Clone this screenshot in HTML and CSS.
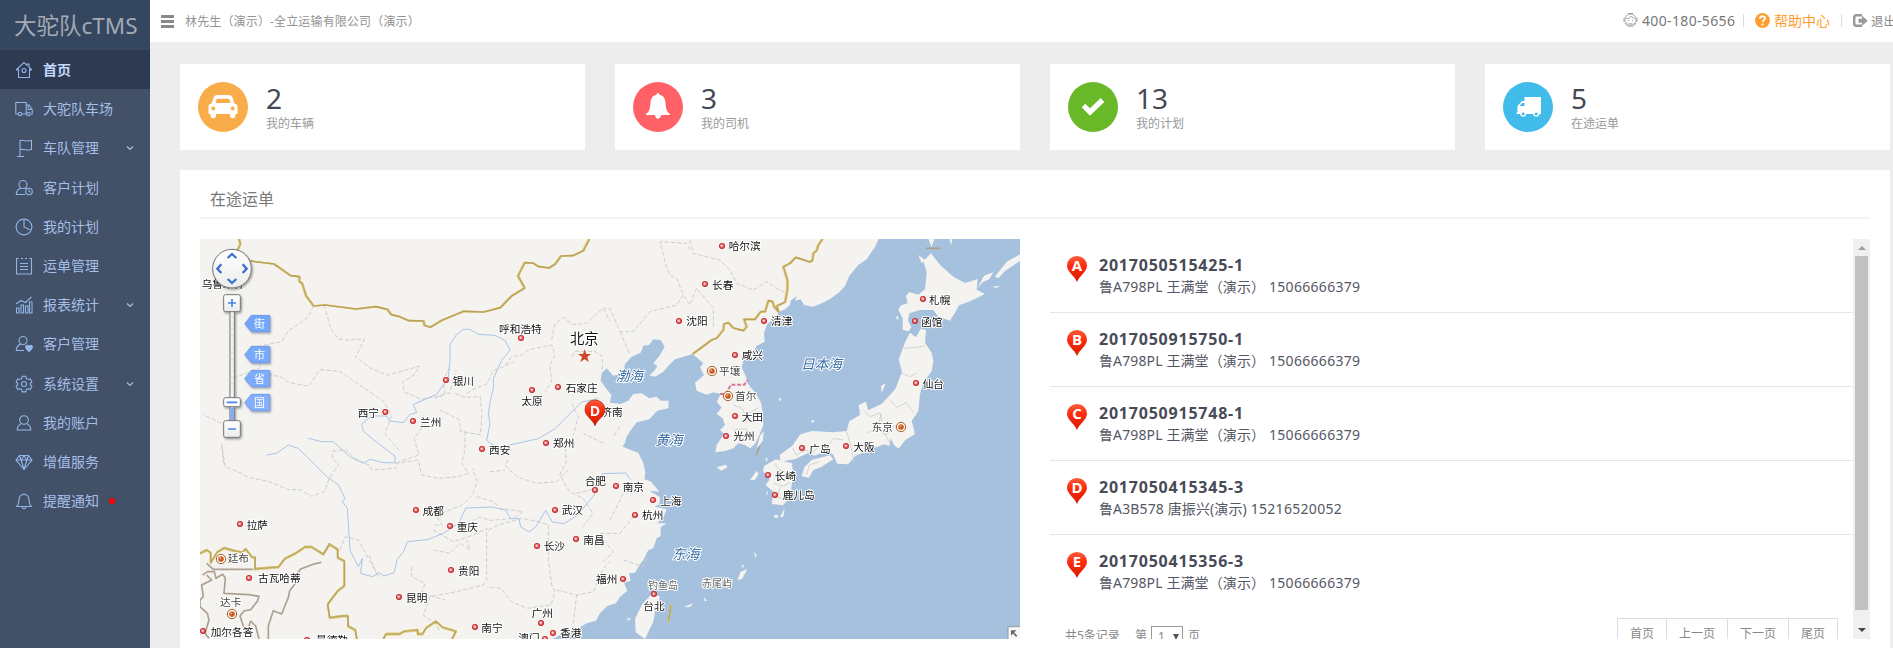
FILE: index.html
```html
<!DOCTYPE html>
<html lang="zh-CN">
<head>
<meta charset="utf-8">
<title>大驼队cTMS</title>
<link rel="stylesheet" href="styles.css">
</head>
<body>
<div class="app">
  <aside class="sidebar">
    <div class="brand">大驼队cTMS</div>
    <nav class="menu">
      <a class="item active"><svg class="ico" viewBox="0 0 18 18"><path d="M1 9 9 1.5 12 4.3V3h2v3.2L17 9M3.5 8v8.5h11V8M1 9h2.5M17 9h-2.5"/><circle cx="9" cy="9.5" r="2"/></svg><span>首页</span></a>
      <a class="item"><svg class="ico" viewBox="0 0 18 18"><path d="M3.5 14H.8V2.5h10.4V14H6.8M11.2 5h3l3 5v4h-1M13.2 5v4.5h3.6"/><circle cx="5" cy="14" r="1.7"/><circle cx="13.5" cy="14" r="1.7"/></svg><span>大驼队车场</span></a>
      <a class="item"><svg class="ico" viewBox="0 0 18 18"><path d="M5 17.5V1.5c3-1 5 1.500 11.500 0v9c-4 1.500-7-.8-11.500 0M2 17.500h7"/></svg><span>车队管理</span><svg class="chev" viewBox="0 0 8 8"><path d="M1 2.500 4 5.500 7 2.500"/></svg></a>
      <a class="item"><svg class="ico" viewBox="0 0 18 18"><circle cx="8" cy="5.500" r="4"/><path d="M6 9c-3 1-4.700 3.500-4.700 6.500H10M10 9.200l1.500.6"/><circle cx="14" cy="12.500" r="3.300"/><path d="M14 10.500v2l1.500.800"/></svg><span>客户计划</span></a>
      <a class="item"><svg class="ico" viewBox="0 0 18 18"><circle cx="9" cy="9" r="7.900"/><path d="M9 2v7l6.500 3"/></svg><span>我的计划</span></a>
      <a class="item"><svg class="ico" viewBox="0 0 18 18"><path d="M3.500 1.500H1.500v15.500h15V1.500h-2M6 1.500h2M10 1.500h2M5 6.500h8M5 9.500h8M5 12.500h8"/></svg><span>运单管理</span></a>
      <a class="item"><svg class="ico" viewBox="0 0 18 18"><path d="M1.500 12h2.500v5H1.500zM6 9h2.500v8H6zM10.500 10H13v7h-2.500zM14.500 6H17v11h-2.500zM1 8l5-3.500 4.500 2 6-5.500"/></svg><span>报表统计</span><svg class="chev" viewBox="0 0 8 8"><path d="M1 2.500 4 5.500 7 2.500"/></svg></a>
      <a class="item"><svg class="ico" viewBox="0 0 18 18"><circle cx="8" cy="5.500" r="4"/><path d="M6 9c-3 1-4.700 3.500-4.700 6.500H9"/><path class="solid" d="M14 16.500c-5-3.500-3.500-6.500-1.500-6.200 1 .1 1.500 1 1.500 1s.5-.9 1.500-1c2-.3 3.500 2.700-1.500 6.200z"/></svg><span>客户管理</span></a>
      <a class="item"><svg class="ico" viewBox="0 0 18 18"><path d="M7.300 1.300h3.400l.7 2.300 1.500.9 2.400-.6 1.600 2.900-1.600 1.700v1.200l1.600 1.700-1.600 2.900-2.400-.6-1.500.9-.7 2.300H7.300l-.7-2.300-1.500-.9-2.400.6-1.600-2.900 1.600-1.700V8.500L1.100 6.800l1.600-2.900 2.400.6 1.500-.9z"/><circle cx="9" cy="9" r="2.500"/></svg><span>系统设置</span><svg class="chev" viewBox="0 0 8 8"><path d="M1 2.500 4 5.500 7 2.500"/></svg></a>
      <a class="item"><svg class="ico" viewBox="0 0 18 18"><circle cx="9" cy="6" r="4.300"/><path d="M6.500 9.500C4 10.500 2.200 13 2.200 16h13.600c0-3-1.800-5.500-4.300-6.500"/></svg><span>我的账户</span></a>
      <a class="item"><svg class="ico" viewBox="0 0 18 18"><path d="M4.500 2.500h9L17 7l-8 9.500L1 7zM1.500 7h15M4.500 2.500 6 7l3 9 3-9 1.500-4.500M6 7l3-4 3 4"/></svg><span>增值服务</span></a>
      <a class="item"><svg class="ico" viewBox="0 0 18 18"><path d="M1.800 14.500h14.400C14 12.500 14.200 10 14 7.500c-.2-3-2-5-5-5s-4.800 2-5 5c-.2 2.500 0 5-2.200 7zM9 1v1.500M7 15c.3 2.200 3.700 2.200 4 0"/></svg><span>提醒通知</span><i class="dot"></i></a>
    </nav>
  </aside>

  <div class="content">
    <header class="topbar">
      <i class="burger"></i>
      <span class="who">林先生（演示）-全立运输有限公司（演示）</span>
      <div class="tools">
        <svg class="agent" viewBox="0 0 15 16"><circle cx="7.500" cy="7.500" r="5.600"/><path d="M3 6.500c3 0 4.500-1 5.500-2.500.5 1.500 2 2.500 4 2.500M1 6v4M14 6v4M5.300 8.500h1M9 8.500h1M5.500 11c1.200 1 2.800 1 4 0M2 11c1 4 9 5 11 0M5 1.500h5"/></svg>
        <span class="tel">400-180-5656</span>
        <i class="sep"></i>
        <svg class="help" viewBox="0 0 15 15"><circle cx="7.500" cy="7.500" r="7.400"/><path d="M5 5.800c0-3.300 5-3.200 5-.4 0 1.800-2.400 1.800-2.400 3.500M7.500 10.500v2"/></svg>
        <span class="helptxt">帮助中心</span>
        <i class="sep second"></i>
        <svg class="exit" viewBox="0 0 15 13"><path d="M9 1.200H3.500Q1.200 1.200 1.200 3.500v6q0 2.300 2.300 2.300H9"/><path class="arrow" d="M5.500 4.800H9V1.800l5.800 5-5.800 5V8.800H5.500z"/></svg>
        <span class="out">退出</span>
      </div>
    </header>

    <section class="cards">
      <div class="card"><svg class="round" viewBox="0 0 50 50"><circle cx="25" cy="25" r="25" fill="#f8ac4a"/><path fill="#fff" fill-rule="evenodd" d="M10.500 24.500q0-2.500 3-3l2-6q.8-2.500 3.500-2.500h12q2.700 0 3.500 2.500l2 6q3 .5 3 3v7.500h-2v1.500a2.700 2.700 0 0 1-5.500 0V32H18v1.500a2.700 2.700 0 0 1-5.500 0V32h-2zM17.500 21h15l-1.300-4.200H18.800zM15.300 24.500a2 2 0 1 0 .01 0zM34.700 24.500a2 2 0 1 0 .01 0z"/></svg><div class="fig"><b>2</b><span>我的车辆</span></div></div>
      <div class="card"><svg class="round" viewBox="0 0 50 50"><circle cx="25" cy="25" r="25" fill="#ff6166"/><path fill="#fff" d="M25 11q1.300 0 1.500 1.700c4 .8 5.800 4 6 8 .3 5.500 1 8.500 4.500 11.300v1H28c-.5 5-5.500 5-6 0h-9v-1c3.500-2.800 4.200-5.800 4.500-11.300.2-4 2-7.200 6-8Q23.700 11 25 11z"/></svg><div class="fig"><b>3</b><span>我的司机</span></div></div>
      <div class="card"><svg class="round" viewBox="0 0 50 50"><circle cx="25" cy="25" r="25" fill="#68b828"/><path fill="none" stroke="#fff" stroke-width="5.200" d="m15.500 23.500 6.500 6.500L34.500 18"/></svg><div class="fig"><b>13</b><span>我的计划</span></div></div>
      <div class="card"><svg class="round" viewBox="0 0 50 50"><circle cx="25" cy="25" r="25" fill="#40bbea"/><path fill="#fff" fill-rule="evenodd" d="M21.500 15H38v17h-1.500a3.300 3.300 0 0 1-6.500 0h-6.500a3.300 3.300 0 0 1-6.500 0H13.500v-1.500h1V24l4.500-5h2.500zM16.500 24h5v-3h-2.300zM20.200 30.600a1.500 1.500 0 1 0 .01 0zM33.200 30.600a1.500 1.500 0 1 0 .01 0z"/></svg><div class="fig"><b>5</b><span>在途运单</span></div></div>
    </section>

    <section class="panel">
      <h2>在途运单</h2>
      <div class="cols">
        <svg class="map" viewBox="30 27 2460 1200">
          <defs>
            <g id="city"><circle r="9" fill="#c2242c"/><circle r="6.500" fill="#e2595c"/><circle cx="-1" cy="-1" r="3.500" fill="#fbd8d6"/></g>
            <g id="cap"><circle r="14" fill="#fff" stroke="#a0591f" stroke-width="3"/><circle r="8.500" fill="#cd5a1e"/><circle cx="-2" cy="-2" r="3" fill="#eeb070"/></g>
            <linearGradient id="red" x1="0" y1="0" x2="0" y2="1"><stop offset="0" stop-color="#ff5a3c"/><stop offset=".4" stop-color="#fb2b0e"/><stop offset="1" stop-color="#d81b00"/></linearGradient>
            <linearGradient id="btn" x1="0" y1="0" x2="0" y2="1"><stop offset="0" stop-color="#fff"/><stop offset="1" stop-color="#ececec"/></linearGradient>
            <linearGradient id="tag" x1="0" y1="0" x2="0" y2="1"><stop offset="0" stop-color="#71a5f8"/><stop offset="1" stop-color="#86b0fb"/></linearGradient>
            <filter id="sh" x="-20%" y="-20%" width="150%" height="150%"><feDropShadow dx="3" dy="4" stdDeviation="2.500" flood-opacity=".4"/></filter>
          </defs>
          <rect x="30" y="27" width="2460" height="1200" fill="#f4f3f0"/>
          <g transform="translate(1230 0)">
            <path class="sea" d="M836 27 825 50 800 88 775 105 748 138 735 168 718 187 690 207 665 220 640 230 612 225 602 208 585 212 590 198 572 212 570 225 555 238 538 245 525 262 500 285 492 310 494 335 470 348 458 368 430 392 425 412 438 440 444 462 466 488 482 515 488 545 490 585 478 615 465 642 450 655 435 645 415 640 400 655 375 663 346 667 350 645 372 612 360 600 375 585 368 565 350 552 365 532 350 517 362 492 340 487 320 494 290 482 285 458 312 436 300 412 310 400 278 372 250 380 225 388 210 402 190 425 165 440 148 436 165 420 172 408 160 400 178 378 194 350 182 330 160 328 147 345 130 347 122 368 95 380 75 402 70 430 40 437 20 415 5 430 2 452 18 475 34 495 30 518 62 522 85 512 100 492 125 490 148 505 170 500 182 512 206 512 205 535 172 542 148 568 110 577 93 600 80 620 75 638 68 650 92 660 115 668 130 700 136 728 133 748 152 754 178 785 148 782 180 802 178 822 165 830 200 838 190 862 172 880 200 880 182 892 182 918 170 925 160 955 145 960 130 990 118 1006 105 1028 87 1030 92 1052 72 1058 82 1082 60 1100 48 1120 22 1128 0 1150-12 1172-40 1180-65 1195-100 1202-140 1227H1260V27z"/>
            <path class="isle" d="m993 70 28 36 40 35 34 18 38-12-3 32 25 13-45 22-33 12-12 22-15 24-35-12-15-20-40 0-32 10-4 22 10 20-8 12-18-4 0-35-13-25 8-14 20-6-5-22 10-12 27 8 20-16 5-52-10-33zM985 27h18l-8 24zM1049 27h8l-4 20zM955 75l20 15-10 10zM1132 175l20-38 28-10-12 20-20 10zM1185 140l35-45 40-22v20l-45 30-20 22zM1178 170l22-3-12 8zM888 260l8-2-4 14z"/>
            <path class="isle" d="m930 308 18 14 14-26 16 4-3 38 20 30 5 26-5 30-25 34-10 35-5 50-20 30 8 30 1 10-28 17-20 26-15-12-8-20-5 24-15-5-42 15-45 20-22 25-32-2-13-28-25-10-30 14-20-8-38 18-45 8-2-20 38-28 24-34 35-10 62 4 42-4 8-30 32-18-4-30 22-10 6 26 42-20 40-44 20-52-10-36 18-50z"/>
            <path class="isle" d="m605 738 8-26 22-22 55-14 10 12-38 24-22 8-14 24zM492 708l36-20 48 12 3 30-8 70-22 26-34-4 6-36-24-20 12-18-20-24zM470 655l10-38 12-14-4 30-14 18zM350 712l28-8 4 8-18 10zM450 750l20-28 6 10-12 18zM845 490l-2-22 14-8zM540 862l14-28-4 26zM522 855h12v8h-10zM158 1090l22 10-14 40-6 35-25 52-28-20-2-40 22-45zM412 1050l10-25 20-8-16 30zM424 1006h10l-6 8zM462 965l8 10-4 10zM312 1102l10 10-8 2zM252 1130l28-10-10 12zM80 1165h12l-6 8zM535 505h10l-4 10zM632 572l12-2-6 10zM495 685h8l-2 12zM498 790l6-8-2 14z"/>
            <path class="inner" d="m578 655 10 20 30-15 20 10 20-25 22 10 20-30 30 5M620 735l8-30 30-10M740 605l12 40 10 50M790 540l20 20 30-12 8 30M870 510l20 22 30-14 20 30M870 640l-16-30-20-20 10-40M905 430l24 10 20-10M910 355l50-4 14-5M525 700l10 18 40 14M520 760l30 8 20-10M540 770l-6 30 20 10M800 610l30-16 26 22 30-30M400 525l26 10 10 20 40-22M400 600l34-4 30 20"/>
          </g>
          <path class="prov" d="M370 227l-15 35-30 20-30 20-20 33-60 12M402 224l20 70 22 33 30 3 50-3-28 54 45 33 50 22 70-20 28-8-20 30-32 18 6 30 50 22 46-8 30-10 10 0 20-70M130 445l80-32 0-68M215 427l60 15 20 15 60 12 35-50 60 5 50 35 80 55 25 42-20 55 42 50M780 410l-20 40 4 45-30 10M830 490l20-12 40-15 20-42 30-10 30-15M795 490l30 12 45-2 6 50-5 64-60-10-3-35-60-30M945 405l20-25 30-5 20-15 70-15 10 30-15 30 5 50-20 30M1085 330l10-50 25-18 30 22 40-5 50-45 20 40M1145 380l10-16 60 0 22 15 0 50M1145 520l20 40-15 55M100 700l-5-55M95 580l-55-25M95 640l10 70 50 20 20 12 60 12 60 25 35 0 35 20 40-15 12-38 30-45-20-15 0-22 40-5 30 28 40 18 10 15 70-5 10-20 60-20-15-50 20-25 10-45M615 700l70-10 10 45 50 10 60-5 30-10-20-30 10-40 0-60M955 690l-10 15 35 35 60 20 60-5 40-40M900 725l45-4M1155 640l-30 5 4 50-20 40 30 50 40 20 30 45-30 40M1160 790l60-15M860 800l50 15 20 20 70 10-30 20-70 6-30-10-20 10M735 885l22 0-20-30 30-10 50-20 30-30 15-40-15-40M730 900l60 35 60-20 40-20 0 155-10 15-80 20-80 15-20 55 40 30 10 20M895 900l30-15 70-20 50 10 30 10 0 100 10 80 10 20-12 40-70 10-50-20-30-40-40-4M1100 1080l60 15 50-10 30-70 20-20M1150 1180l10-85M665 1010l0 30 40 20-10 30 70 20M450 960l15-40 40 10 60 110-30-70M730 960l50 10 30-30 30 20-10-30M1240 640l-60-30M1260 870l40-80 40-10M1230 910l60 0 40-50M1240 930l30 35-30 30M1300 990l60 20 10-30M1500 30l10 40 80 20 30 30 20 40 50 20 40-25 30 20 30 15M1500 60l-10-20-80-5 20 80 10 20 20 10 20 50 20 30 20-50 50 60 0 60M1480 195l-20 30-80 20-50 60-40 0-30-70-20 0M1290 305l30 70M1290 590l-20 30"/>
          <path class="river" d="M230 675l30-5 35-25 30 10 50 50 35 35 35 25 20 40-8 10 15 20 8 125 25 50 12-25-5 45 35 10 20-12 15 10 30-10 10-40 20-25 10-28 60-6 50-20 45-30 20-45 80-3 40 10 15 25 25 0 5 25 25 15 20-15 30-50 20 35 35 5 40-25 50-60 10-30 15-35 70-2 15 20M355 625l40 10 35 0 50 45 40 20 20-12 40 10 35 0 0-20-60-45-35-30-5-20 30-25 45 0 10 15 40 5 20-25 20-5-10-25 70-30 35-50 5-55 0-45 20-30 20-15 20 0 25 15 50 3 30 15 15 30-25 30-25 55 0 30-10 40-5 35 5 30-10 50 35 25 30-10 90-20 50-30 80-80 50-10"/>
          <g class="line gold"><path d="M147 27l4 15-14 30M180 93l72 9 50 35 26 3 0 15 8 4 12 38 23 31 34-3 93 12 60-7 34 8 12 16 25 6 28 12 44 1 2 13 18 6 35-21 65-27 60 2 50-13 35-36 38-23-20-36 20-40 25 1 15 10 33 5 18-11 18-25 35-1 32-15 18-35"/><path transform="translate(1230 0)" d="M278 372 335 330 350 325 370 300 372 282 385 278 400 294 430 302 440 290 432 268 465 268 482 245 495 245 505 212 518 215 522 230 536 246 530 228 555 217 562 180 562 150 550 110 570 100 587 82 630 96 638 90 640 70 650 62 655 45 668 27"/><path d="M1435 1175l8-50"/><path d="M30 970l20-10 12 8 0 30 20-32 20-12 30 8 25 5 10-10 20 25 8 0 0 35 70-6 20-25 30-15 30-20 20 0 35 22 18-30 25 15 0 25 20 10 0 75-20 15-15 20-15 20 6 40 40-5 15 0 0 30 22 12 5 30-12 8M580 1227l8-15 40 0 15-8 40-4 0 12 15 0 10-18 30-20 20 18 40 12-12 23"/></g>
          <path class="line brown" d="M50 1000l20 18 120 0M38 1035l15-10 20 0 5 20 20-12 8 12-4 45 75 4 30 5-5 15-20 25-20 4-12 15 10 30 10 20 12-35 15 15 10 38M50 1035l15 15-30 15 5 35-10 10 0 20 22 20 5 20-12 40 12 15M235 1227l0-40 15-45 25 10 20-50 4-20 20-25-5-15 18-25 40-15 22-5M2207 55h44M1699 676l10-27"/>
          <path d="M1590 492h18l15-28h40l10-14" fill="none" stroke="#e0749b" stroke-width="6" stroke-dasharray="12 5"/>
          <g class="lbl" transform="translate(-2 0)">
            <text x="37" y="175">乌鲁木齐</text><text x="929" y="308">呼和浩特</text><text x="790" y="465">银川</text><text x="505" y="560">西宁</text><text x="692" y="588">兰州</text><text x="996" y="526">太原</text><text x="1129" y="486">石家庄</text><text x="1236" y="557">济南</text><text x="1091" y="652">郑州</text><text x="899" y="672">西安</text><text x="700" y="855">成都</text><text x="802" y="902">重庆</text><text x="172" y="896">拉萨</text><text x="1186" y="765">合肥</text><text x="1117" y="852">武汉</text><text x="1182" y="942">南昌</text><text x="1063" y="961">长沙</text><text x="806" y="1034">贵阳</text><text x="650" y="1115">昆明</text><text x="206" y="1057">古瓦哈蒂</text><text x="64" y="1217">加尔各答</text><text x="876" y="1206">南宁</text><text x="1027" y="1160">广州</text><text x="1112" y="1222">香港</text><text x="987" y="1235">澳门</text><text x="380" y="1242">曼德勒</text><text x="1220" y="1060">福州</text>
            <text x="1618" y="60">哈尔滨</text><text x="1568" y="176">长春</text><text x="1491" y="286">沈阳</text><text x="1745" y="286">清津</text><text x="1657" y="388">咸兴</text><text x="1657" y="573">大田</text><text x="1632" y="631">光州</text><text x="2219" y="221">札幌</text><text x="2195" y="287">函馆</text><text x="2200" y="475">仙台</text><text x="1860" y="668">广岛</text><text x="1992" y="663">大阪</text><text x="1756" y="750">长崎</text><text x="1780" y="808">鹿儿岛</text><text x="1300" y="784">南京</text><text x="1412" y="824">上海</text><text x="1358" y="868">杭州</text><text x="1362" y="1140">台北</text>
            <g class="gray"><text x="115" y="997">廷布</text><text x="92" y="1129">达卡</text><text x="1589" y="435">平壤</text><text x="1637" y="509">首尔</text><text x="2047" y="602">东京</text></g>
            <g class="small"><text x="1376" y="1078">钓鱼岛</text><text x="1538" y="1071">赤尾屿</text></g>
            <text class="bj" x="1142" y="342">北京</text>
            <g class="seatxt"><text x="1279" y="454">渤海</text><text x="1398" y="645">黄海</text><text x="1835" y="418">日本海</text><text x="1448" y="986">东海</text></g>
          </g>
          <g><use href="#city" x="993" y="324"/><use href="#city" x="768" y="450"/><use href="#city" x="586" y="546"/><use href="#city" x="669" y="573"/><use href="#city" x="1026" y="480"/><use href="#city" x="1104" y="471"/><use href="#city" x="1068" y="639"/><use href="#city" x="876" y="657"/><use href="#city" x="678" y="840"/><use href="#city" x="780" y="888"/><use href="#city" x="150" y="882"/><use href="#city" x="1215" y="780"/><use href="#city" x="1095" y="840"/><use href="#city" x="1158" y="927"/><use href="#city" x="1041" y="948"/><use href="#city" x="783" y="1020"/><use href="#city" x="627" y="1101"/><use href="#city" x="177" y="1044"/><use href="#city" x="39" y="1203"/><use href="#city" x="855" y="1191"/><use href="#city" x="1053" y="1179"/><use href="#city" x="1089" y="1209"/><use href="#city" x="1065" y="1227"/><use href="#city" x="351" y="1230"/><use href="#city" x="1299" y="1047"/><use href="#city" x="1596" y="48"/><use href="#city" x="1545" y="162"/><use href="#city" x="1467" y="273"/><use href="#city" x="1722" y="273"/><use href="#city" x="1635" y="375"/><use href="#city" x="1635" y="558"/><use href="#city" x="1608" y="618"/><use href="#city" x="2199" y="207"/><use href="#city" x="2175" y="273"/><use href="#city" x="2178" y="459"/><use href="#city" x="1836" y="654"/><use href="#city" x="1968" y="648"/><use href="#city" x="1734" y="735"/><use href="#city" x="1755" y="795"/><use href="#city" x="1278" y="768"/><use href="#city" x="1389" y="810"/><use href="#city" x="1335" y="855"/><use href="#city" x="1392" y="1092"/>
          <use href="#cap" x="93" y="987"/><use href="#cap" x="126" y="1152"/><use href="#cap" x="1566" y="423"/><use href="#cap" x="1614" y="498"/><use href="#cap" x="2133" y="591"/></g>
          <path d="M1184 358l5 14h14l-11 9 4 15-12-8-13 8 5-15-12-9h15z" fill="#cf4a2c"/>
          <g transform="translate(1215 510)"><path d="M0 77C-5 60-30 48-30 29a30 29 0 0 1 60 0C30 48 5 60 0 77z" fill="url(#red)" stroke="#a31c08" stroke-width="2"/><text class="pinmap" x="0" y="48">D</text></g>
          <g filter="url(#sh)"><circle cx="126" cy="116" r="58" fill="url(#btn)" stroke="#777" stroke-width="3"/><rect x="120" y="240" width="13" height="330" fill="#f5f5f5" stroke="#777" stroke-width="3"/><path d="M121 532h11v40h-11z" fill="#84acf5"/><rect x="101" y="194" width="50" height="51" rx="6" fill="url(#btn)" stroke="#777" stroke-width="3"/><rect x="101" y="572" width="50" height="50" rx="6" fill="url(#btn)" stroke="#777" stroke-width="3"/><rect x="101" y="503" width="50" height="27" rx="6" fill="#fff" stroke="#777" stroke-width="3"/></g>
          <path d="M122 262h9m-9 18h9m-9 18h9m-9 18h9m-9 18h9m-9 18h9m-9 18h9m-9 18h9m-9 18h9m-9 18h9m-9 18h9m-9 18h9m-9 18h9" stroke="#ccc" stroke-width="2"/>
          <path d="M113 84l13-12 13 12M113 147l13 12 13-12M94 103l-12 13 12 13M158 103l12 13-12 13" fill="none" stroke="#3c6fd2" stroke-width="7"/>
          <path d="M114 219h24M126 207v24M114 597h24M110 517h32" stroke="#4c83e8" stroke-width="5"/>
          <g class="tags" filter="url(#sh)"><path d="M164 281l20-25h55v49h-55zM164 374l20-25h55v49h-55zM164 446l20-25h55v49h-55zM164 518l20-25h55v49h-55z"/><text x="192" y="294">街</text><text x="192" y="387">市</text><text x="192" y="459">省</text><text x="192" y="531">国</text></g>
          <rect x="2454" y="1190" width="40" height="40" fill="#f6f6f6" stroke="#999" stroke-width="3"/><path d="M2463 1201h16l-16 16zM2468 1209l3-3 11 11-4 4z" fill="#666"/>
        </svg>

        <div class="scroller">
          <div class="list">
            <div class="row"><div class="pin"><svg viewBox="0 0 20 26"><path d="M10 26C8 20 0 16 0 9.700a10 9.700 0 0 1 20 0C20 16 12 20 10 26z" fill="url(#red)"/></svg><b>A</b></div><div class="info"><b>2017050515425-1</b><span>鲁A798PL 王满堂（演示） <em>15066666379</em></span></div></div>
            <div class="row"><div class="pin"><svg viewBox="0 0 20 26"><path d="M10 26C8 20 0 16 0 9.700a10 9.700 0 0 1 20 0C20 16 12 20 10 26z" fill="url(#red)"/></svg><b>B</b></div><div class="info"><b>2017050915750-1</b><span>鲁A798PL 王满堂（演示） <em>15066666379</em></span></div></div>
            <div class="row"><div class="pin"><svg viewBox="0 0 20 26"><path d="M10 26C8 20 0 16 0 9.700a10 9.700 0 0 1 20 0C20 16 12 20 10 26z" fill="url(#red)"/></svg><b>C</b></div><div class="info"><b>2017050915748-1</b><span>鲁A798PL 王满堂（演示） <em>15066666379</em></span></div></div>
            <div class="row"><div class="pin"><svg viewBox="0 0 20 26"><path d="M10 26C8 20 0 16 0 9.700a10 9.700 0 0 1 20 0C20 16 12 20 10 26z" fill="url(#red)"/></svg><b>D</b></div><div class="info"><b>2017050415345-3</b><span>鲁A3B578 唐振兴(演示) <em>15216520052</em></span></div></div>
            <div class="row"><div class="pin"><svg viewBox="0 0 20 26"><path d="M10 26C8 20 0 16 0 9.700a10 9.700 0 0 1 20 0C20 16 12 20 10 26z" fill="url(#red)"/></svg><b>E</b></div><div class="info"><b>2017050415356-3</b><span>鲁A798PL 王满堂（演示） <em>15066666379</em></span></div></div>
            <div class="pager">
              <span class="total">共5条记录</span><span>第</span><span class="sel">1<i></i></span><span>页</span>
              <div class="btns"><a>首页</a><a>上一页</a><a>下一页</a><a>尾页</a></div>
            </div>
          </div>
          <div class="bar"><i class="up"></i><i class="thumb"></i><i class="down"></i></div>
        </div>
      </div>
    </section>
  </div>
</div>
</body>
</html>
```
FILE: styles.css
```css
* { box-sizing: border-box; }
body { margin: 0; background: #ededed; font: 12px "Noto Sans", "Noto Sans CJK SC", sans-serif; color: #888; }
i, em { font-style: normal; }
.app { display: flex; width: 1893px; height: 648px; overflow: hidden; }

.sidebar { width: 150px; flex: none; background: #425068; }
.brand { height: 50px; padding-left: 14px; background: #344660; color: #a3aab4; font-size: 22.500px; line-height: 51px; white-space: nowrap; }
.menu { display: flex; flex-direction: column; }
.item { display: flex; align-items: center; height: 39.200px; padding: 1px 0 0 15px; color: #a5bfe6; font-size: 14px; line-height: 38px; }
.item span { margin-left: 10px; }
.active { background: #2d3a51; color: #c2dbff; font-weight: bold; }
.ico { width: 18px; height: 18px; fill: none; stroke: #92b6e6; stroke-width: 1.100; }
.ico .solid { fill: #92b6e6; }
.chev { width: 8px; height: 8px; margin-left: 27px; fill: none; stroke: #a5bfe6; stroke-width: 1.200; }
.dot { width: 6px; height: 6px; margin-left: 10px; border-radius: 50%; background: #f00; }

.content { flex: 1; min-width: 0; }
.topbar { display: flex; align-items: center; height: 42px; padding-left: 11px; background: #fff; white-space: nowrap; }
.burger { width: 13px; height: 13px; margin-right: 11px; border: solid #888; border-width: 3px 0; background: linear-gradient(#888, #888) 0 2px / 100% 3px no-repeat; }
.who { color: #939393; letter-spacing: .15px; }
.tools { display: flex; align-items: center; width: 270px; height: 38px; margin: 0 0 2px auto; overflow: hidden; }
.tools > * { flex: none; }
.agent { width: 15px; height: 16px; fill: none; stroke: #8d8d8d; stroke-width: .8; }
.tel { width: 97px; margin-left: 4px; font-size: 14px; letter-spacing: .35px; color: #777; }
.sep { width: 1px; height: 13px; margin: 0 11px 0 4px; background: #ddd; }
.help { width: 15px; height: 15px; fill: #ff9d2e; }
.help path { fill: none; stroke: #fff; stroke-width: 2; }
.helptxt { margin-left: 4px; color: #ff9d2e; font-size: 14px; }
.second { margin: 0 11px; }
.exit { width: 15px; height: 13px; fill: none; stroke: #999; stroke-width: 2.400; }
.exit .arrow { fill: #999; stroke: none; }
.out { margin-left: 3px; font-size: 12.500px; color: #888; }

.cards { display: grid; grid-template-columns: repeat(4, 405px); gap: 30px; padding: 22px 0 0 30px; }
.card { display: flex; height: 86px; padding: 18px; background: #fff; }
.round { width: 50px; height: 50px; }
.fig { display: flex; flex-direction: column; margin-left: 18px; }
.fig b { height: 33px; color: #454854; font-size: 28px; font-weight: 400; line-height: 33px; }
.fig span { color: #999; line-height: 17px; }

.panel { width: 1710px; height: 600px; margin: 20px 0 0 30px; padding: 0 20px; background: #fff; }
.panel h2 { height: 49px; margin: 0 0 20px; padding: 11px 10px 0; border-bottom: 2px solid #f3f3f3; color: #787878; font-size: 16px; font-weight: 400; line-height: 36px; }
.cols { display: grid; grid-template-columns: 820px 820px; gap: 30px; }
.map { width: 820px; height: 400px; display: block; }
.sea { fill: #a6c1de; }
.isle { fill: #f4f3f0; }
.inner { fill: none; stroke: #ccc; stroke-width: 2.500; }
.prov { fill: none; stroke: #cfcecd; stroke-width: 3; stroke-dasharray: 13 6; }
.river { fill: none; stroke: #a9c6e6; stroke-width: 3; }
.line { fill: none; stroke-width: 5; stroke-linejoin: round; }
.gold { stroke: #b6a263; filter: drop-shadow(0 0 2px #f7dd80) drop-shadow(0 0 1px #f7dd80); }
.brown { stroke: #ada091; }
.lbl text { font: 32px "Noto Sans CJK SC", sans-serif; fill: #111; stroke: #fff; stroke-width: 6; stroke-linejoin: round; paint-order: stroke; }
.lbl .gray text { fill: #444; }
.lbl .small text { font-size: 30px; fill: #666; }
.lbl .bj { font-size: 43px; }
.lbl .seatxt text { font-size: 41px; font-style: italic; fill: #3a6ca6; }
.pinmap { font: bold 42px "Open Sans", sans-serif; fill: #fff; text-anchor: middle; }
.tags path { fill: url(#tag); stroke: #5d8de8; stroke-width: 2; }
.tags text { font: 33px "Noto Sans CJK SC", sans-serif; fill: #fff; }

.scroller { display: flex; height: 400px; overflow: hidden; }
.list { width: 803px; }
.row { display: flex; height: 74px; padding: 17px 0 0 17px; border-bottom: 1px solid #e6e6e6; }
.row:nth-child(5) { border-color: transparent; }
.pin { position: relative; width: 20px; height: 26px; }
.pin svg { width: 20px; height: 26px; display: block; }
.pin b { position: absolute; inset: 0; font: bold 15px/19px "Open Sans", sans-serif; color: #fff; text-align: center; }
.info { display: flex; flex-direction: column; margin-left: 12px; color: #555864; font-size: 14px; white-space: pre; }
.info b { height: 19px; color: #484b57; font-size: 16px; letter-spacing: .78px; line-height: 18px; }
.info span { line-height: 24px; letter-spacing: .12px; }
.info em { letter-spacing: .3px; }
.pager { display: flex; padding: 9px 15px 0; line-height: 36px; }
.total { margin-right: 15px; }
.sel { display: flex; align-items: center; gap: 8px; width: 32px; height: 22px; margin: 8px 5px 0 4px; padding-left: 6px; border: 1px solid #999; line-height: 18px; }
.sel i { border: 3px solid transparent; border-top: 6px solid #555; border-bottom: 0; }
.btns { display: flex; height: 32px; margin-left: auto; border: 1px solid #ddd; line-height: 29px; }
.btns a { padding: 0 12px; border-left: 1px solid #ddd; }
.btns a:first-child { border: 0; }
.bar { display: flex; flex-direction: column; align-items: center; width: 17px; background: #f0f0f0; }
.up { margin: 7px 0 6px; border: 4px solid transparent; border-top-width: 0; border-bottom-color: #a0a0a0; }
.thumb { width: 13px; height: 354px; background: #c1c1c1; }
.down { margin-top: 18px; border: 4px solid transparent; border-bottom: 0; border-top-color: #444; }
```
